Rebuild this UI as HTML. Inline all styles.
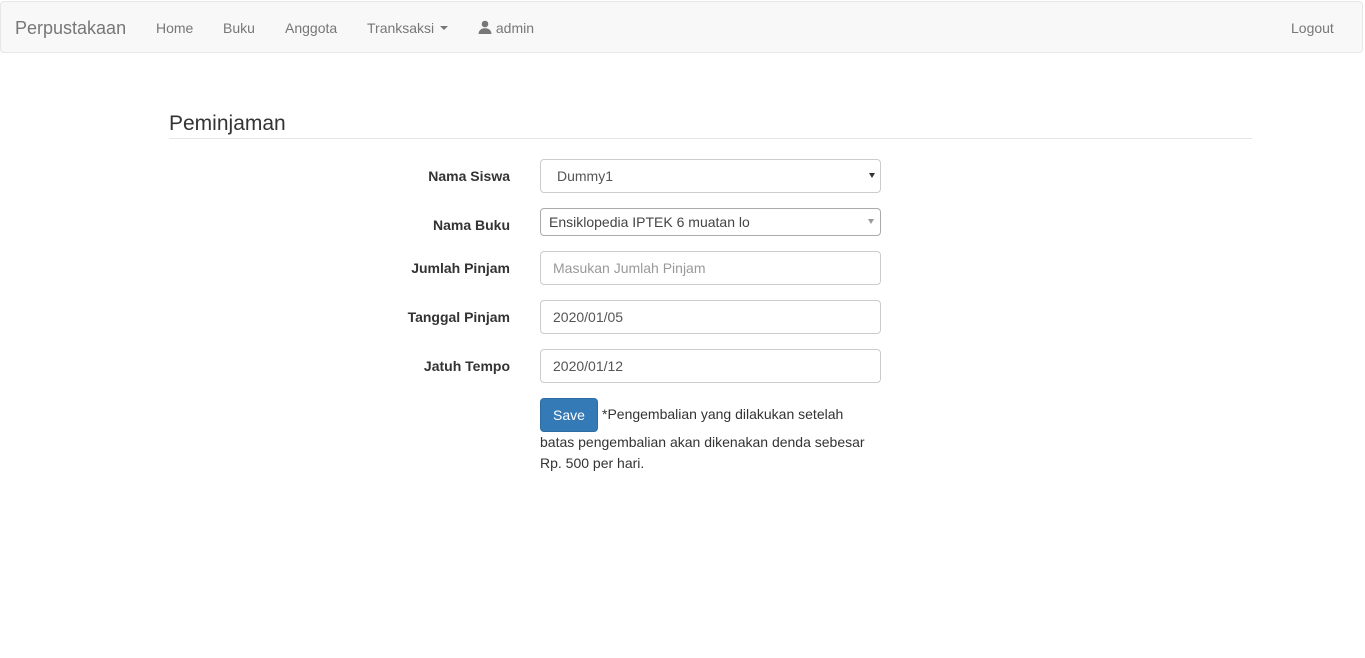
<!DOCTYPE html>
<html><head><style>
body{margin:0;font-family:"Liberation Sans",sans-serif;font-size:14px;color:#333;background:#fff;width:1365px;height:658px;overflow:hidden;position:relative}
.nav{position:absolute;left:0;top:1px;width:1363px;height:52px;background:#f8f8f8;border:1px solid #e7e7e7;border-radius:4px;box-sizing:border-box}
.nav span{position:absolute;top:18px;color:#777;font-size:14px}
.brand{font-size:18px!important;top:16px!important}
h3{position:absolute;left:169px;top:112px;margin:0;font-size:21px;font-weight:normal;color:#333}
.hr{position:absolute;left:169px;top:138px;width:1083px;border-top:1px solid #e5e5e5}
.lbl{position:absolute;right:855px;font-weight:bold;font-size:14px}
.in{position:absolute;left:540px;width:341px;height:34px;box-sizing:border-box;border:1px solid #ccc;border-radius:4px;padding:8px 12px;font-size:14px;color:#555}
.arr{position:absolute;right:5px;top:13px;width:0;height:0;border-left:3.5px solid transparent;border-right:3.5px solid transparent;border-top:5px solid #555}
.btn{position:absolute;left:540px;top:398px;width:58px;height:34px;background:#337ab7;border:1px solid #2e6da4;border-radius:4px;box-sizing:border-box;color:#fff;text-align:center;line-height:32px}
.t{position:absolute;white-space:nowrap}
</style></head><body>
<div class="nav">
<span class="brand" style="left:14px">Perpustakaan</span>
<span style="left:155px">Home</span>
<span style="left:222px">Buku</span>
<span style="left:284px">Anggota</span>
<span style="left:366px">Tranksaksi <span style="position:relative;top:-3px;display:inline-block;border-left:4px solid transparent;border-right:4px solid transparent;border-top:4px solid #777;width:0;height:0;margin-left:2px"></span></span>
<span style="left:477px"><svg width="14" height="14" viewBox="0 0 14 14" style="vertical-align:-1px"><circle cx="7" cy="4" r="3.3" fill="#777"/><path d="M0.5 14 Q1 8.5 7 8.3 Q13 8.5 13.5 14Z" fill="#777"/></svg> admin</span>
<span style="left:1290px">Logout</span>
</div>
<h3>Peminjaman</h3><div class="hr"></div>
<div class="lbl" style="top:168px">Nama Siswa</div>
<div class="in" style="top:159px;height:34px;padding-left:16px;color:#555">Dummy1<div class="arr" style="border-top-color:#333;right:5px"></div></div>
<div class="lbl" style="top:217px">Nama Buku</div>
<div class="in" style="top:208px;height:28px;padding:5px 8px;border-color:#aaa;color:#444">Ensiklopedia IPTEK 6 muatan lo<div class="arr" style="top:10px;border-top-color:#999;right:6px"></div></div>
<div class="lbl" style="top:260px">Jumlah Pinjam</div>
<div class="in" style="top:251px;color:#999">Masukan Jumlah Pinjam</div>
<div class="lbl" style="top:309px">Tanggal Pinjam</div>
<div class="in" style="top:300px">2020/01/05</div>
<div class="lbl" style="top:358px">Jatuh Tempo</div>
<div class="in" style="top:349px">2020/01/12</div>
<div class="btn">Save</div>
<div class="t" style="left:602px;top:406px">*Pengembalian yang dilakukan setelah</div>
<div class="t" style="left:540px;top:434px">batas pengembalian akan dikenakan denda sebesar</div>
<div class="t" style="left:540px;top:455px">Rp. 500 per hari.</div>
</body></html>
